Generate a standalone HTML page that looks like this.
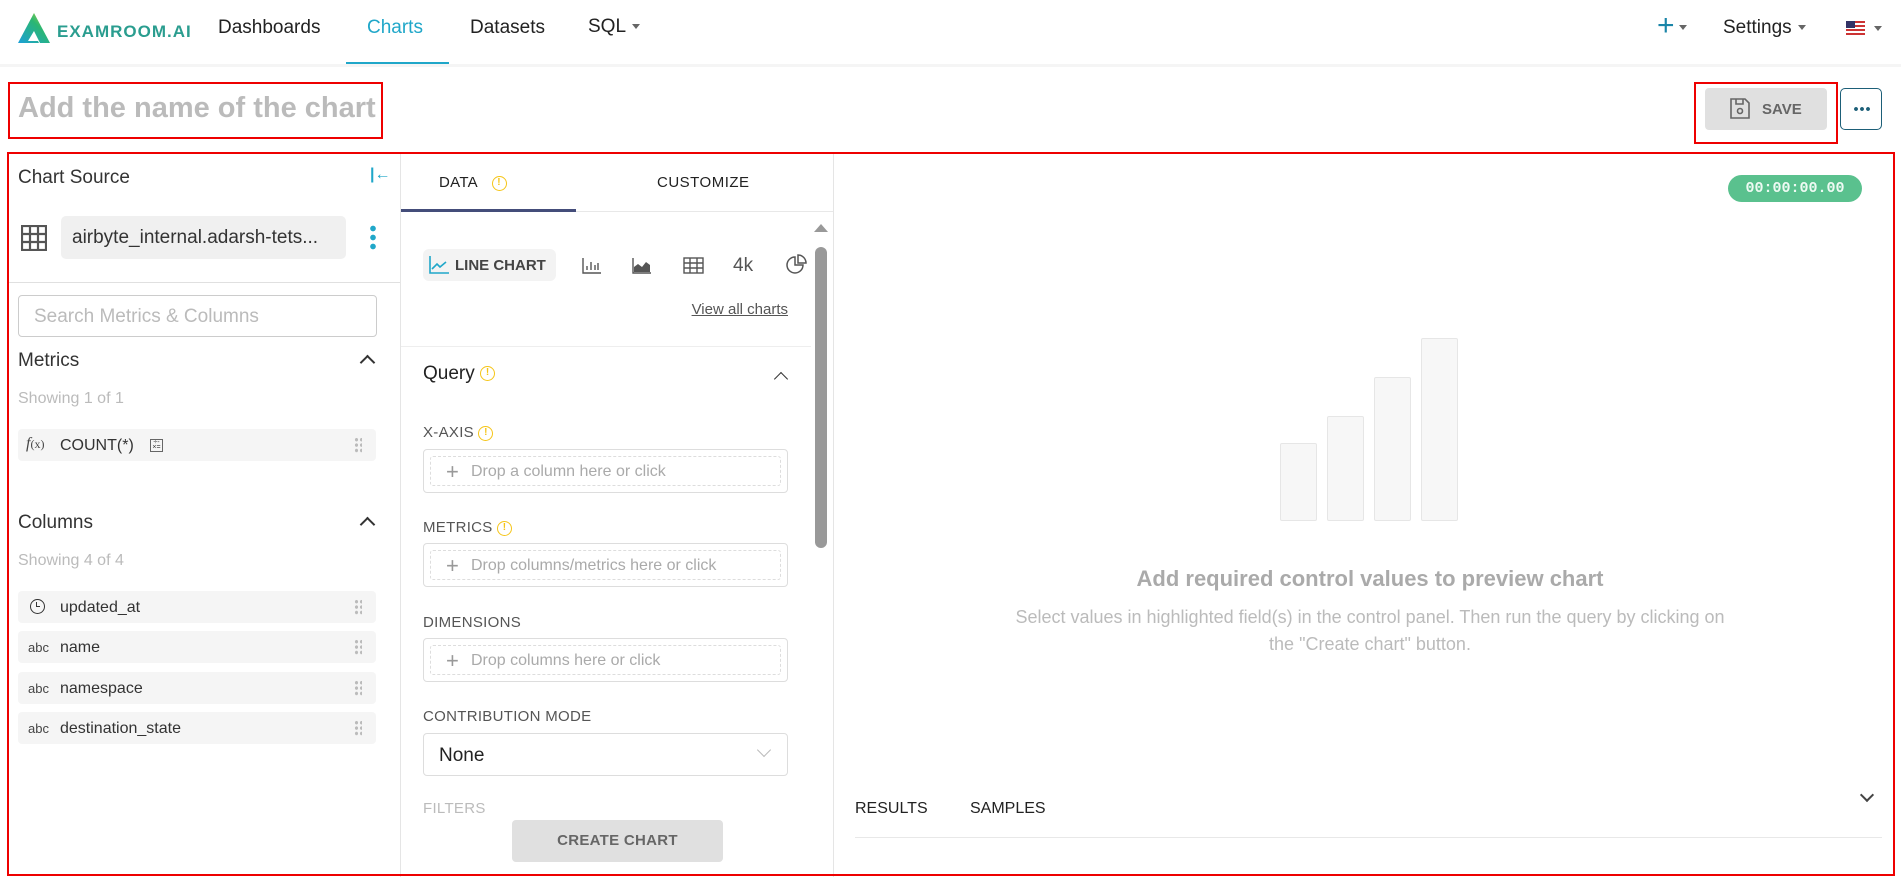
<!DOCTYPE html>
<html><head><meta charset="utf-8"><style>
*{box-sizing:border-box;margin:0;padding:0}
body{width:1901px;height:879px;overflow:hidden;background:#fff;font-family:"Liberation Sans",Arial,sans-serif;color:#323232;position:relative}
.a{position:absolute;white-space:nowrap}
.nav{font-size:19px;color:#222}
.caret{display:inline-block;width:0;height:0;border-left:4px solid transparent;border-right:4px solid transparent;border-top:5px solid #666;vertical-align:middle;margin-left:6px}
.row{position:absolute;left:18px;width:358px;height:32px;background:#f5f5f5;border-radius:4px;font-size:16px;color:#333}
.row .t{position:absolute;left:42px;top:8px}
.row .ic{position:absolute;left:10px;top:9px;font-size:13px;color:#444}
.drag{position:absolute;right:14px;top:8px;width:8px;height:16px;background-image:radial-gradient(circle,#bbb 1.5px,transparent 1.8px);background-size:5px 5.4px}
.lbl{position:absolute;left:423px;font-size:15px;color:#555;letter-spacing:.3px}
.drop{position:absolute;left:423px;width:365px;height:44px;border:1px solid #ddd;border-radius:4px}
.drop div{position:absolute;left:6px;top:6px;right:6px;bottom:6px;border:1px dashed #ddd;border-radius:3px;font-size:16px;color:#aaa;padding:6px 0 0 40px}
.drop div:before{content:"+";position:absolute;left:15px;top:2px;font-size:22px;color:#999}
.warn{display:inline-block;width:15px;height:15px;border:1.5px solid #f5c518;border-radius:50%;color:#f5c518;font-size:10px;text-align:center;line-height:12px;font-weight:bold;vertical-align:middle;margin-left:4px}
.bar{position:absolute;background:#f7f7f7;border:1.5px solid #e6e6e6;border-radius:2px;width:37px}
</style></head><body>
<!-- nav -->
<svg class="a" style="left:18px;top:13px" width="32" height="30" viewBox="0 0 32 30"><defs><linearGradient id="g" x1="0" y1="1" x2="1" y2="0"><stop offset="0" stop-color="#1aa0d8"/><stop offset=".6" stop-color="#2bb673"/><stop offset="1" stop-color="#c8dc32"/></linearGradient></defs><path d="M16 0 L32 30 H22 L16 18 L10 28 H20 L21 30 H0 Z" fill="url(#g)"/></svg>
<div class="a" style="left:57px;top:22px;font-size:17px;font-weight:bold;color:#2a9d8f;letter-spacing:1px">EXAMROOM.AI</div>
<div class="a nav" style="left:218px;top:17px">Dashboards</div>
<div class="a nav" style="left:367px;top:17px;color:#20a7c9">Charts</div>
<div class="a" style="left:346px;top:62px;width:103px;height:3px;background:#20a7c9"></div>
<div class="a nav" style="left:470px;top:17px">Datasets</div>
<div class="a nav" style="left:588px;top:16px">SQL<span class="caret"></span></div>
<div class="a" style="left:1657px;top:9px;font-size:30px;color:#1a85a8">+<span class="caret" style="margin-left:4px"></span></div>
<div class="a nav" style="left:1723px;top:17px">Settings<span class="caret"></span></div>
<div class="a" style="left:1846px;top:21px;width:19px;height:14px;background:repeating-linear-gradient(#c33 0 2px,#fff 2px 4px)"><div style="width:9px;height:7px;background:#336"></div></div>
<span class="a caret" style="left:1868px;top:26px"></span>
<div class="a" style="left:0;top:64px;width:1901px;height:3px;background:#f5f5f5"></div>
<!-- title -->
<div class="a" style="left:8px;top:82px;width:375px;height:57px;border:2px solid #e00"></div>
<div class="a" style="left:18px;top:92px;font-size:29px;font-weight:bold;color:#bbb">Add the name of the chart</div>
<div class="a" style="left:1694px;top:82px;width:144px;height:62px;border:2px solid #e00"></div>
<div class="a" style="left:1705px;top:88px;width:122px;height:42px;background:#e0e0e0;border-radius:4px"></div>
<svg class="a" style="left:1730px;top:98px" width="20" height="21" viewBox="0 0 20 21" fill="none" stroke="#666" stroke-width="1.6"><path d="M1 1H15L19 5V20H1Z"/><path d="M6 1V6H13V1"/><circle cx="10" cy="13" r="2.5"/></svg>
<div class="a" style="left:1762px;top:101px;font-size:15px;font-weight:bold;color:#666">SAVE</div>
<div class="a" style="left:1840px;top:88px;width:42px;height:42px;border:1.5px solid #1d5f78;border-radius:5px"><div style="position:absolute;left:12px;top:18px;width:17px;height:4px;background:radial-gradient(circle,#1d5f78 1.8px,transparent 2px);background-size:6px 4px"></div></div>
<!-- main frame -->
<div class="a" style="left:7px;top:152px;width:1888px;height:724px;border:2px solid #e00;z-index:5"></div>
<!-- left panel -->
<div class="a" style="left:400px;top:153px;width:1px;height:724px;background:#e5e5e5"></div>
<div class="a" style="left:18px;top:167px;font-size:19px;color:#333">Chart Source</div>
<div class="a" style="left:370px;top:166px;font-size:16px;color:#20a7c9;font-weight:bold">|←</div>
<svg class="a" style="left:21px;top:225px" width="26" height="26" viewBox="0 0 26 26" fill="none" stroke="#555" stroke-width="2.2"><rect x="1" y="1" width="24" height="24"/><path d="M9 1V25M17 1V25M1 9H25M1 17H25"/></svg>
<div class="a" style="left:61px;top:216px;width:285px;height:43px;background:#f0f0f0;border-radius:5px;font-size:19px;color:#333;padding:11px 0 0 11px">airbyte_internal.adarsh-tets...</div>
<div class="a" style="left:370px;top:224px;width:6px;height:26px;background:radial-gradient(circle,#20a7c9 2.6px,transparent 3px);background-size:6px 9px"></div>
<div class="a" style="left:8px;top:282px;width:392px;height:1px;background:#e0e0e0"></div>
<div class="a" style="left:18px;top:295px;width:359px;height:42px;border:1px solid #ccc;border-radius:4px;font-size:19px;color:#bbb;padding:10px 0 0 15px">Search Metrics &amp; Columns</div>
<div class="a" style="left:18px;top:350px;font-size:19px;color:#333">Metrics</div>
<div class="a" style="left:362px;top:352px;width:11px;height:11px;border-left:2px solid #333;border-top:2px solid #333;transform:rotate(45deg);transform-origin:center;margin-top:5px"></div>
<div class="a" style="left:18px;top:390px;font-size:16px;color:#bbb">Showing 1 of 1</div>
<div class="row" style="top:429px"><span class="ic" style="font-family:'Liberation Serif';font-style:italic;font-size:16px;top:6px;left:8px">f<span style="font-style:normal;font-size:12px">(x)</span></span><span class="t">COUNT(*)</span><span style="position:absolute;left:132px;top:10px;width:13px;height:13px;border:1px solid #666;font-size:7px;line-height:5px;text-align:center">÷-<br>×=</span><span class="drag"></span></div>
<div class="a" style="left:18px;top:512px;font-size:19px;color:#333">Columns</div>
<div class="a" style="left:362px;top:519px;width:11px;height:11px;border-left:2px solid #333;border-top:2px solid #333;transform:rotate(45deg)"></div>
<div class="a" style="left:18px;top:552px;font-size:16px;color:#bbb">Showing 4 of 4</div>
<div class="row" style="top:591px"><span class="ic" style="left:12px;top:8px;width:15px;height:15px;border:1.8px solid #333;border-radius:50%"><span style="position:absolute;left:5px;top:2px;width:4px;height:5px;border-left:1.5px solid #333;border-bottom:1.5px solid #333"></span></span><span class="t">updated_at</span><span class="drag"></span></div>
<div class="row" style="top:631px"><span class="ic">abc</span><span class="t">name</span><span class="drag"></span></div>
<div class="row" style="top:672px"><span class="ic">abc</span><span class="t">namespace</span><span class="drag"></span></div>
<div class="row" style="top:712px"><span class="ic">abc</span><span class="t">destination_state</span><span class="drag"></span></div>
<!-- middle -->
<div class="a" style="left:833px;top:153px;width:1px;height:724px;background:#e5e5e5"></div>
<div class="a" style="left:439px;top:174px;font-size:15px;color:#222;letter-spacing:.3px">DATA <span class="warn" style="margin-left:10px">!</span></div>
<div class="a" style="left:657px;top:174px;font-size:15px;color:#222;letter-spacing:.5px">CUSTOMIZE</div>
<div class="a" style="left:401px;top:211px;width:432px;height:1px;background:#e8e8e8"></div>
<div class="a" style="left:401px;top:209px;width:175px;height:3px;background:#444d7a"></div>
<div class="a" style="left:423px;top:249px;width:133px;height:32px;background:#f3f3f3;border-radius:6px"></div>
<svg class="a" style="left:429px;top:256px" width="20" height="18" viewBox="0 0 20 18" fill="none" stroke="#20a7c9" stroke-width="1.6"><path d="M1 0V17H20"/><path d="M3 13L8 8L11 11L17 6"/></svg>
<div class="a" style="left:455px;top:257px;font-size:15px;font-weight:bold;color:#444">LINE CHART</div>
<svg class="a" style="left:582px;top:258px" width="20" height="16" viewBox="0 0 20 16" fill="none" stroke="#555" stroke-width="1.4"><path d="M1 0V15H19M5 12V8M9 12V4M13 12V7M16 12V5"/></svg>
<svg class="a" style="left:632px;top:258px" width="20" height="16" viewBox="0 0 20 16"><path d="M1 0V15H19" fill="none" stroke="#555" stroke-width="1.4"/><path d="M2 14V9L6 6L10 9L14 4L18 7V14Z" fill="#555"/></svg>
<svg class="a" style="left:683px;top:257px" width="21" height="17" viewBox="0 0 21 17" fill="none" stroke="#555" stroke-width="1.4"><rect x="1" y="1" width="19" height="15"/><path d="M1 6H20M1 11H20M7 1V16M14 1V16"/></svg>
<div class="a" style="left:733px;top:255px;font-size:19px;color:#555">4k</div>
<svg class="a" style="left:785px;top:254px" width="22" height="22" viewBox="0 0 22 22" fill="none" stroke="#555" stroke-width="1.5"><path d="M10 3A8 8 0 1 0 18 11H10Z"/><path d="M13 1A8 8 0 0 1 21 9H13Z"/></svg>
<div class="a" style="left:677px;top:301px;width:111px;text-align:right;font-size:15px;color:#555;text-decoration:underline">View all charts</div>
<div class="a" style="left:401px;top:346px;width:410px;height:1px;background:#eee"></div>
<div class="a" style="left:423px;top:363px;font-size:19px;color:#222">Query <span class="warn" style="margin-left:0">!</span></div>
<div class="a" style="left:776px;top:374px;width:10px;height:10px;border-left:1.8px solid #333;border-top:1.8px solid #333;transform:rotate(45deg)"></div>
<div class="lbl" style="top:424px">X-AXIS <span class="warn" style="margin-left:0">!</span></div>
<div class="drop" style="top:449px"><div>Drop a column here or click</div></div>
<div class="lbl" style="top:519px">METRICS <span class="warn" style="margin-left:0">!</span></div>
<div class="drop" style="top:543px"><div>Drop columns/metrics here or click</div></div>
<div class="lbl" style="top:614px">DIMENSIONS</div>
<div class="drop" style="top:638px"><div>Drop columns here or click</div></div>
<div class="lbl" style="top:708px">CONTRIBUTION MODE</div>
<div class="a" style="left:423px;top:733px;width:365px;height:43px;border:1px solid #ddd;border-radius:4px;font-size:19px;color:#222;padding:11px 0 0 15px">None</div>
<div class="a" style="left:759px;top:745px;width:10px;height:10px;border-right:1.3px solid #bbb;border-bottom:1.3px solid #bbb;transform:rotate(45deg)"></div>
<div class="lbl" style="top:800px;color:#bbb">FILTERS</div>
<div class="a" style="left:512px;top:820px;width:211px;height:42px;background:#e0e0e0;border-radius:4px;text-align:center;font-size:15px;font-weight:bold;color:#666;line-height:42px;letter-spacing:.3px">CREATE CHART</div>
<div class="a" style="left:814px;top:224px;width:0;height:0;border-left:7px solid transparent;border-right:7px solid transparent;border-bottom:8px solid #999"></div>
<div class="a" style="left:815px;top:247px;width:12px;height:301px;background:#999;border-radius:6px"></div>
<!-- right -->
<div class="a" style="left:1728px;top:175px;width:134px;height:27px;background:#5ac18e;border-radius:14px;text-align:center;font-family:'Liberation Mono',monospace;font-size:15px;font-weight:bold;color:#eefaf3;line-height:27px">00:00:00.00</div>
<div class="bar" style="left:1280px;top:443px;height:78px"></div>
<div class="bar" style="left:1327px;top:416px;height:105px"></div>
<div class="bar" style="left:1374px;top:377px;height:144px"></div>
<div class="bar" style="left:1421px;top:338px;height:183px"></div>
<div class="a" style="left:1370px;top:566px;transform:translateX(-50%);font-size:22px;font-weight:bold;color:#aaa">Add required control values to preview chart</div>
<div class="a" style="left:1370px;top:604px;transform:translateX(-50%);font-size:18px;color:#bbb;text-align:center;line-height:27px;white-space:normal;width:805px">Select values in highlighted field(s) in the control panel. Then run the query by clicking on<br>the "Create chart" button.</div>
<div class="a" style="left:855px;top:800px;font-size:16px;color:#222">RESULTS</div>
<div class="a" style="left:970px;top:800px;font-size:16px;color:#222">SAMPLES</div>
<div class="a" style="left:1862px;top:790px;width:10px;height:10px;border-right:2px solid #444;border-bottom:2px solid #444;transform:rotate(45deg)"></div>
<div class="a" style="left:855px;top:837px;width:1027px;height:1px;background:#e8e8e8"></div>
</body></html>
